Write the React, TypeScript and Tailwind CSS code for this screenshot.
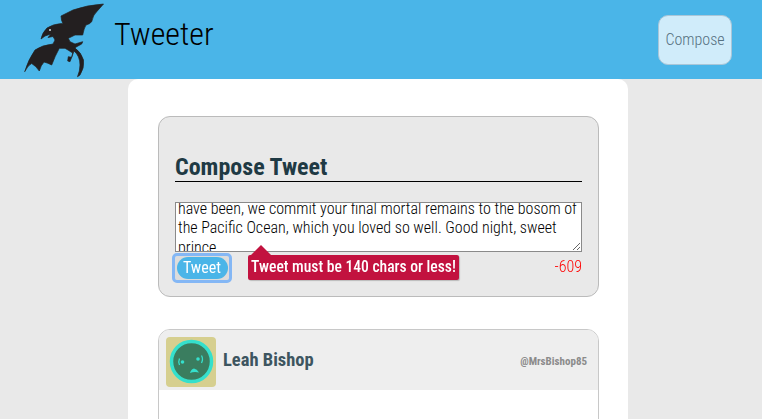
import { useEffect, useRef } from "react";

const speech =
  "Donny was a good bowler, and a good man. He was one of us. He was a man who loved the outdoors, and bowling, and as a surfer he explored the beaches of Southern California, from La Jolla to Leo Carrillo and up to Pismo. He died, like so many young men of his generation, before his time. In your wisdom, Lord, you took him, as you took so many bright flowering young men at Khe Sanh, at Langdok, at Hill 364. And so, Theodore Donald Karabotsos, in accordance with what we think your dying wishes might well\nhave been, we commit your final mortal remains to the bosom of the Pacific Ocean, which you loved so well. Good night, sweet prince.";

function Dragon() {
  return (
    <svg viewBox="0 0 90 80" className="w-[90px] h-[80px] shrink-0 text-[#231f20]" fill="currentColor" stroke="currentColor" strokeWidth="0.7" strokeLinejoin="round">
      <path d="M83.5 4 Q67 5 53 10 L41 16 Q41 20 43 24 L41.5 23.5 Q33 24 27 28 Q22 33 21 39 L25 36 L31 34 L28 37.5 L33 36.5 L35 40 L33 44 Q22 45 15 50 Q8 60 4.7 71.7 Q8 65 11.7 63.5 Q16 66 19.3 71 Q21 65 24 62 Q28 63 31.7 65 Q35 56 39.3 48.3 L45 48.3 L48 50 L52.7 53 L51.7 57.3 L48.3 56.7 L47.7 61 L50 61.7 L54 51 Q60 56 60 65 Q60 71 57.5 76.7 L60 75 Q64.5 68 63.5 60 Q61 52 55 48 L56.7 46.7 L61.7 44 L62.7 41.7 L55 44 L50 41.7 L48.3 38.3 L55 35 L62.7 35 Q64 28 66 25 Q70 24 71.7 21.7 Q73 15 76.7 11.7 Z" />
      <circle cx="30" cy="30" r="1" fill="#cfd8dc" stroke="none" />
    </svg>
  );
}

function Avatar() {
  return (
    <div className="w-[50px] h-[50px] shrink-0 rounded-[4px] bg-[#d6cf8f]">
      <svg viewBox="0 0 50 50" className="w-[50px] h-[50px]">
        <circle cx="25.5" cy="24.5" r="20" fill="#3a7d5f" stroke="#35e0cc" strokeWidth="3.5" />
        <circle cx="16.5" cy="25" r="1.8" fill="#35e0cc" />
        <path d="M13.5 21.5 Q12 25 13.5 28" fill="none" stroke="#35e0cc" strokeWidth="1.3" />
        <circle cx="32" cy="22" r="1.8" fill="#35e0cc" />
        <path d="M35.5 18.5 Q37.5 22 35.5 26" fill="none" stroke="#35e0cc" strokeWidth="1.3" />
        <path d="M24 36 Q25 32 28 31.5 Q31 32 33 35.5 Q28 34.5 24 36 Z" fill="#35e0cc" />
      </svg>
    </div>
  );
}

export default function App() {
  const box = useRef<HTMLTextAreaElement>(null);
  useEffect(() => {
    if (box.current) box.current.scrollTop = box.current.scrollHeight - box.current.clientHeight - 6;
  }, []);

  return (
    <div className="h-[419px] overflow-hidden bg-[#e9e9e9] font-['Roboto',sans-serif]">
      <header className="h-[79px] bg-[#4ab5e8] flex items-center pl-[20px] pr-[30px]">
        <Dragon />
        <h1 className="ml-[4px] mb-[11px] text-[32px] font-light text-black font-stretch-condensed">Tweeter</h1>
        <button className="ml-auto mt-[1px] w-[74px] h-[50px] rounded-[10px] border border-[#a9c6d8] bg-[#d0ecfa] text-[#557080] text-[16px] font-light font-stretch-condensed">
          Compose
        </button>
      </header>

      <main className="w-[500px] ml-[128px] bg-white rounded-t-[10px] pt-[37px] px-[30px] h-[340px]">
        <section className="w-[441px] h-[181px] bg-[#e9e9e9] border border-[#bbb] rounded-[12px] px-[16px] pt-[36px]">
          <h2 className="text-[24px] leading-[28px] font-bold text-[#1f3a44] border-b border-black font-stretch-condensed">
            Compose Tweet
          </h2>
          <textarea
            ref={box}
            defaultValue={speech}
            readOnly
            className="block mt-[20px] w-full h-[50px] border border-[#8a8a8a] bg-white text-[16px] leading-[19.5px] px-[2px] font-light text-black font-stretch-condensed [scrollbar-width:none]"
          />
          <div className="relative flex items-start mt-[3px]">
            <button className="mt-[1px] w-[54px] h-[24px] rounded-[2px] bg-[#dcdcdc] outline-[3px] outline-[#84b7f5] flex items-center justify-center">
              <span className="w-[51px] h-[22px] rounded-[11px] bg-[#4ab5e8] text-white text-[16px] leading-[22px] font-stretch-condensed">
                Tweet
              </span>
            </button>
            <div className="relative ml-[19px] h-[25px] w-[211px] text-center rounded-[2px] bg-[#c2123f] text-white text-[15.6px] leading-[25px] font-medium shadow-[1px_1px_1px_rgba(0,0,0,0.2)] font-stretch-condensed">
              <span className="absolute left-[3px] -top-[10px] w-0 h-0 border-x-[10px] border-x-transparent border-b-[10px] border-b-[#c2123f]" />
              Tweet must be 140 chars or less!
            </div>
            <span className="ml-auto text-[16px] font-light text-[#ff0000] font-stretch-condensed">-609</span>
          </div>
        </section>

        <article className="mt-[32px] w-[441px] h-[120px] border border-[#c8c8c8] rounded-t-[12px] overflow-hidden">
          <div className="h-[60px] bg-[#eeeeee] flex items-center pt-[4px] pl-[7px] pr-[11px]">
            <Avatar />
            <span className="ml-[7px] mb-[2px] text-[18.5px] font-bold text-[#3d5560] font-stretch-condensed">Leah Bishop</span>
            <span className="ml-auto text-[11px] font-bold text-[#8b8b8b] font-stretch-condensed">@MrsBishop85</span>
          </div>
        </article>
      </main>
    </div>
  );
}
